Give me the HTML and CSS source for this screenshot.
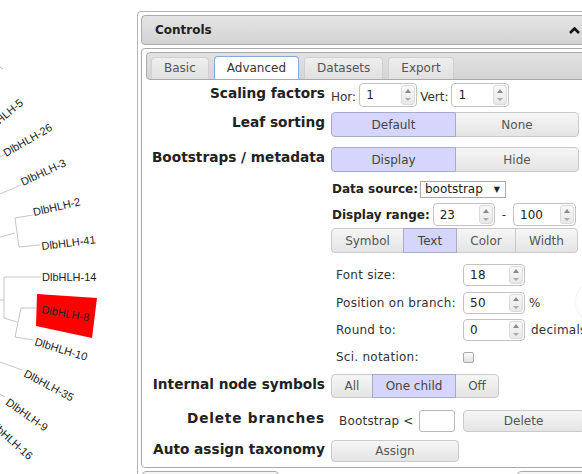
FILE: index.html
```html
<!DOCTYPE html>
<html>
<head>
<meta charset="utf-8">
<link rel="stylesheet" href="styles.css">
</head>
<body>
<div class="page">
  <svg class="tree" width="137" height="474" viewBox="0 0 137 474">
    <g class="branches">
      <path d="M0 67 L3 69"/>
      <path d="M0 157 L5 154"/>
      <path d="M0 194 L21 185"/>
      <path d="M0 237 L15 233"/>
      <path d="M33 215 L15 218 L19 247 L40 245"/>
      <path d="M0 300 L4 300"/>
      <path d="M41 277 L4 277 L4 318 L17 322"/>
      <path d="M37 308 L21 308 L15 337 L33 340"/>
      <path d="M0 362 L22 370"/>
      <path d="M0 394 L5 397"/>
    </g>
    <polygon class="hl" points="37,294 97,298 92,338 36,326"/>
    <g class="leaf">
      <text transform="translate(-13 135) rotate(-40)">DlbHLH-5</text>
      <text transform="translate(6 157) rotate(-30)">DlbHLH-26</text>
      <text transform="translate(23 186) rotate(-25)">DlbHLH-3</text>
      <text transform="translate(34 216) rotate(-13)">DlbHLH-2</text>
      <text transform="translate(42 250) rotate(-7)">DlbHLH-41</text>
      <text transform="translate(42 281)">DlbHLH-14</text>
      <text transform="translate(41 313) rotate(10)">DlbHLH-8</text>
      <text transform="translate(34 345) rotate(17)">DlbHLH-10</text>
      <text transform="translate(23 376) rotate(28)">DlbHLH-35</text>
      <text transform="translate(5 404) rotate(35)">DlbHLH-9</text>
      <text transform="translate(-12 424) rotate(42)">DlbHLH-16</text>
    </g>
  </svg>

  <div class="controls">
    <div class="controls-head">
      <span>Controls</span>
      <svg class="caret" width="11" height="7" viewBox="0 0 11 7"><polyline points="1,6 5.5,1.5 10,6"/></svg>
    </div>
    <div class="controls-body">
      <ul class="tabs">
        <li class="tab">Basic</li>
        <li class="tab active">Advanced</li>
        <li class="tab">Datasets</li>
        <li class="tab">Export</li>
      </ul>
      <div class="form">
        <div class="row">
          <div class="lbl">Scaling factors</div>
          <div class="inline">
            <span class="txt">Hor:</span>
            <span class="spin w58 h24"><span class="val">1</span><span class="arrows"><i class="up"></i><i class="down"></i></span></span>
            <span class="txt vert">Vert:</span>
            <span class="spin w58 h24"><span class="val">1</span><span class="arrows"><i class="up"></i><i class="down"></i></span></span>
          </div>
        </div>

        <div class="row r-leaf">
          <div class="lbl">Leaf sorting</div>
          <div class="seg h25">
            <span class="btn on w125">Default</span>
            <span class="btn w124">None</span>
          </div>
        </div>

        <div class="row r-boot">
          <div class="lbl">Bootstraps / metadata</div>
          <div>
            <div class="seg h25">
              <span class="btn on w125">Display</span>
              <span class="btn w124">Hide</span>
            </div>
            <div class="sub">
              <div class="ds-row">
                <span class="sublbl">Data source:</span>
                <span class="select"><span>bootstrap</span><span class="tri">▼</span></span>
              </div>
              <div class="dr-row">
                <span class="sublbl">Display range:</span>
                <span class="spin w62 h23"><span class="val">23</span><span class="arrows"><i class="up"></i><i class="down"></i></span></span>
                <span class="dash">-</span>
                <span class="spin w63 h23"><span class="val">100</span><span class="arrows"><i class="up"></i><i class="down"></i></span></span>
              </div>
              <div class="seg h25 opts">
                <span class="btn w73">Symbol</span>
                <span class="btn on w54">Text</span>
                <span class="btn w60">Color</span>
                <span class="btn w63">Width</span>
              </div>
              <div class="subsub">
                <div class="ss-row">
                  <span>Font size:</span>
                  <span class="spin w62 h22"><span class="val">18</span><span class="arrows"><i class="up"></i><i class="down"></i></span></span>
                  <span></span>
                </div>
                <div class="ss-row m6">
                  <span>Position on branch:</span>
                  <span class="spin w62 h22"><span class="val">50</span><span class="arrows"><i class="up"></i><i class="down"></i></span></span>
                  <span class="suffix">%</span>
                </div>
                <div class="ss-row m5">
                  <span>Round to:</span>
                  <span class="spin w62 h22"><span class="val">0</span><span class="arrows"><i class="up"></i><i class="down"></i></span></span>
                  <span class="suffix wide">decimals</span>
                </div>
                <div class="ss-row m5">
                  <span>Sci. notation:</span>
                  <span class="check"></span>
                  <span></span>
                </div>
              </div>
            </div>
          </div>
        </div>

        <div class="row r-node">
          <div class="lbl">Internal node symbols</div>
          <div class="seg h24">
            <span class="btn w42">All</span>
            <span class="btn on w84">One child</span>
            <span class="btn w44">Off</span>
          </div>
        </div>

        <div class="row r-del">
          <div class="lbl up2 spaced">Delete branches</div>
          <div class="inline h22">
            <span class="boot">Bootstrap &lt;</span>
            <span class="box"></span>
            <span class="btn single w122 h22 del">Delete</span>
          </div>
        </div>

        <div class="row r-tax">
          <div class="lbl up1">Auto assign taxonomy</div>
          <div>
            <span class="btn single w128 h22">Assign</span>
          </div>
        </div>
      </div>
    </div>
    <div class="footer">
      <span class="fbox first"></span>
      <span class="fbox last"></span>
    </div>
  </div>
  <div class="ghost"></div>
</div>
</body>
</html>
```

FILE: styles.css
```css
html, body {
  margin: 0;
  padding: 0;
}
body {
  width: 582px;
  height: 474px;
  overflow: hidden;
  background: #fff;
  font-family: "DejaVu Sans", Verdana, sans-serif;
  font-size: 12px;
  color: #333;
}
.page {
  display: flex;
  align-items: flex-start;
  position: relative;
  width: 582px;
  height: 474px;
  overflow: hidden;
}

/* tree */
.tree {
  flex: 0 0 137px;
  display: block;
}
.branches path {
  fill: none;
  stroke: #c6c6c6;
  stroke-width: 1;
}
.hl {
  fill: #ff0000;
}
.leaf text {
  font-family: "Liberation Sans", Arial, sans-serif;
  font-size: 11px;
  fill: #222;
}

/* controls panel */
.controls {
  flex: 0 0 460px;
  box-sizing: border-box;
  margin-top: 11px;
  border: 1px solid #b4b4b4;
  border-radius: 4px;
  padding: 3px;
}
.controls-head {
  height: 30px;
  box-sizing: border-box;
  border: 1px solid #aaa;
  border-radius: 4px;
  background: linear-gradient(#e4e4e4, #d3d3d3);
  display: flex;
  align-items: center;
  justify-content: space-between;
  padding: 0 12px 0 13px;
  font-weight: bold;
  color: #222;
}
.caret polyline {
  fill: none;
  stroke: #111;
  stroke-width: 2.6;
}
.controls-body {
  margin-top: 3px;
  border: 1px solid #aaa;
  border-radius: 4px;
  padding: 3px 4px 5px;
}
.tabs {
  list-style: none;
  margin: 0;
  height: 28px;
  box-sizing: border-box;
  border: 1px solid #aaa;
  border-radius: 4px;
  background: linear-gradient(#e2e2e2, #d4d4d4);
  padding: 4px 4px 0;
  display: flex;
  align-items: flex-end;
  gap: 5px;
}
.tab {
  height: 22px;
  box-sizing: border-box;
  padding: 0 12px;
  border: 1px solid #d0d0d0;
  border-bottom: none;
  border-radius: 4px 4px 0 0;
  background: linear-gradient(#eeeeee, #e0e0e0);
  color: #555;
  line-height: 21px;
}
.tab.active {
  height: 23px;
  background: #fff;
  border-color: #86a9d6;
  color: #333;
  line-height: 22px;
}

/* form */
.form {
  padding-top: 3px;
}
.row {
  display: grid;
  grid-template-columns: 180px 1fr;
  column-gap: 5px;
  align-items: start;
}
.lbl {
  display: flex;
  justify-content: flex-end;
  white-space: nowrap;
  font-weight: bold;
  font-size: 13.7px;
  line-height: 18px;
  padding-top: 1px;
  padding-right: 1px;
  color: #222;
}
.lbl.up2 { margin-top: -2px; }
.lbl.up1 { margin-top: -1px; }
.lbl.spaced { letter-spacing: 0.8px; }
.r-leaf { margin-top: 5px; }
.r-boot { margin-top: 10px; }
.r-node { margin-top: 6px; }
.r-del { margin-top: 12px; }
.r-tax { margin-top: 8px; }

.inline {
  display: flex;
  align-items: center;
  height: 24px;
  white-space: nowrap;
}
.inline.h22 { height: 22px; }
.txt {
  color: #333;
  padding-top: 3px;
  margin-right: 3px;
}
.txt.vert { margin-left: 3px; }

/* spinner */
.spin {
  display: inline-flex;
  box-sizing: border-box;
  border: 1px solid #c2c2c2;
  border-radius: 4px;
  background: #fff;
  align-items: stretch;
  color: #222;
}
.spin .val {
  flex: 1;
  padding-left: 6px;
  display: flex;
  align-items: center;
}
.spin .arrows {
  width: 12px;
  margin: 1px 1px 1px 0;
  border-radius: 3px;
  border: 1px solid #dadada;
  background: linear-gradient(#f8f8f8, #e8e8e8);
  display: flex;
  flex-direction: column;
  justify-content: space-around;
  align-items: center;
}
.spin .up {
  width: 0;
  height: 0;
  border-left: 3px solid transparent;
  border-right: 3px solid transparent;
  border-bottom: 4px solid #8a8a8a;
}
.spin .down {
  width: 0;
  height: 0;
  border-left: 3px solid transparent;
  border-right: 3px solid transparent;
  border-top: 3px solid #aaa;
}
.w58 { width: 58px; }
.w62 { width: 62px; }
.w63 { width: 63px; }
.h24 { height: 24px; }
.h23 { height: 23px; }
.h22 { height: 22px; }
.h25 { height: 25px; }

/* buttons */
.seg {
  display: flex;
}
.btn {
  box-sizing: border-box;
  border: 1px solid #cacaca;
  background: linear-gradient(#f6f6f6, #e4e4e4);
  color: #555;
  display: flex;
  align-items: center;
  justify-content: center;
  white-space: nowrap;
}
.seg .btn { height: 100%; }
.seg .btn + .btn { margin-left: -1px; }
.seg .btn:first-child { border-radius: 4px 0 0 4px; }
.seg .btn:last-child { border-radius: 0 4px 4px 0; }
.btn.on {
  background: #d6d6fc;
  border-color: #a9a9cc;
  color: #444;
  position: relative;
}
.btn.single {
  border-radius: 4px;
  display: inline-flex;
}
.w42 { width: 42px; }
.w44 { width: 44px; }
.w54 { width: 54px; }
.w60 { width: 60px; }
.w73 { width: 73px; }
.w84 { width: 84px; }
.w122 { width: 122px; }
.w124 { width: 124px; }
.w125 { width: 125px; }
.w128 { width: 128px; }

/* bootstrap sub-section */
.sub {
  margin-top: 9px;
}
.sublbl {
  font-weight: bold;
  color: #222;
  padding-left: 1px;
  white-space: nowrap;
}
.ds-row {
  display: flex;
  align-items: center;
  height: 16px;
  gap: 2px;
}
.select {
  box-sizing: border-box;
  width: 86px;
  height: 17px;
  border: 1px solid #aaa;
  padding: 0 5px 0 4px;
  display: flex;
  align-items: center;
  justify-content: space-between;
  background: #fff;
  color: #222;
}
.select .tri {
  font-size: 8px;
}
.dr-row {
  margin-top: 6px;
  display: flex;
  align-items: center;
  height: 23px;
  gap: 3px;
}
.dash {
  margin: 0 4px;
}
.opts {
  margin-top: 2px;
}
.subsub {
  margin-top: 11px;
  padding-left: 5px;
}
.ss-row {
  display: grid;
  grid-template-columns: 127px 62px auto;
  align-items: center;
  height: 22px;
  white-space: nowrap;
  letter-spacing: 0.25px;
}
.ss-row.m6 { margin-top: 6px; }
.ss-row.m5 { margin-top: 5px; }
.suffix { margin-left: 4px; }
.suffix.wide { margin-left: 6px; }
.check {
  width: 11px;
  height: 11px;
  box-sizing: border-box;
  border: 1px solid #a8a8a8;
  border-radius: 2px;
  background: linear-gradient(#fbfbfb, #e2e2e2);
}

/* delete */
.boot {
  padding-left: 8px;
  color: #333;
  letter-spacing: 0.2px;
}
.box {
  width: 36px;
  height: 22px;
  box-sizing: border-box;
  border: 1px solid #b8b8b8;
  border-radius: 3px;
  margin-left: 5px;
  background: #fff;
}
.del {
  margin-left: 8px;
}

/* footer */
.footer {
  margin-top: 3px;
  display: flex;
  justify-content: space-between;
  padding-left: 1px;
  height: 20px;
}
.fbox {
  box-sizing: border-box;
  height: 20px;
  border: 1px solid #aaa;
  border-radius: 4px 4px 0 0;
  background: linear-gradient(#f6f6f6, #e8e8e8);
}
.fbox.first { width: 137px; }
.fbox.last { width: 76px; }

.ghost {
  position: absolute;
  left: 576px;
  top: 282px;
  width: 40px;
  height: 40px;
  border-radius: 50%;
  box-shadow: 0 0 3px rgba(0, 0, 0, 0.12);
}
```
